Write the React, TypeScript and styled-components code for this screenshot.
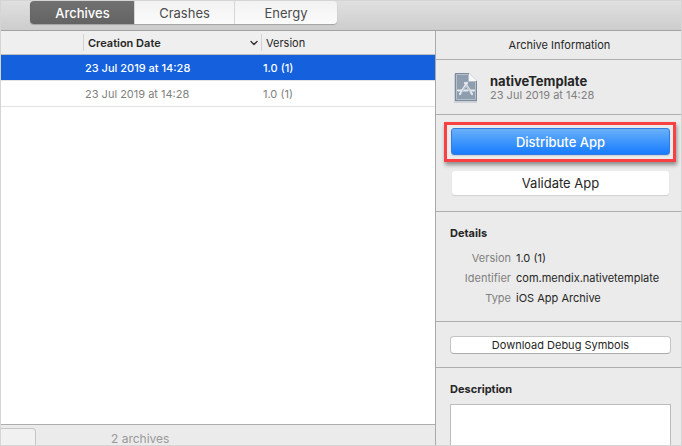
import React from 'react';
import styled, { createGlobalStyle } from 'styled-components';

const GlobalStyle = createGlobalStyle`
  *, *::before, *::after { box-sizing: border-box; }
  body { margin: 0; background: #ebebeb; }
  body, button, input, textarea {
    font-family: Inter, "Liberation Sans", sans-serif;
    font-size: 11px;
    line-height: 16px;
    color: #262626;
  }
`;

const Window = styled.div`
  display: flex;
  flex-direction: column;
  height: 100vh;
  overflow: hidden;
  border: 1px solid #d5d5d5;
`;

const Toolbar = styled.header`
  flex: none;
  height: 30px;
  padding: 0 29px;
  background: linear-gradient(#e0e0e0, #cdcdcd);
  border-bottom: 1px solid #a3a3a3;
`;

const Segments = styled.div`
  display: inline-grid;
  grid-template-columns: 104px 100px 103px;
  height: 23px;
  border-radius: 4px;
  overflow: hidden;
  box-shadow: 0 1px 1px #a2a2a2;
`;

const Segment = styled.button<{ $active?: boolean }>`
  padding: 0;
  border: 0;
  border-left: 1px solid ${(p) => (p.$active ? '#666' : '#d6d6d6')};
  background: ${(p) => (p.$active ? 'linear-gradient(#717171, #636363)' : 'linear-gradient(#f2f2f2, #fbfbfb)')};
  color: ${(p) => (p.$active ? '#fff' : '#4c4c4c')};
  font-size: 13px;
  font-weight: ${(p) => (p.$active ? 500 : 400)};
`;

const Body = styled.div`
  flex: 1;
  min-height: 0;
  display: grid;
  grid-template-columns: minmax(0, 1fr) 246px;
`;

const Main = styled.main`
  display: flex;
  flex-direction: column;
  min-width: 0;
  background: #fff;
`;

const Table = styled.table`
  width: 100%;
  table-layout: fixed;
  border-collapse: separate;
  border-spacing: 0;
`;

const HeadCell = styled.th<{ $width?: number }>`
  width: ${(p) => (p.$width ? `${p.$width}px` : 'auto')};
  height: 24px;
  padding: 0;
  background: #efefef;
  border-bottom: 1px solid #bdbdbd;
  text-align: left;
`;

const HeadLabel = styled.span<{ $sorted?: boolean }>`
  display: flex;
  align-items: center;
  justify-content: space-between;
  height: 17px;
  padding: 0 3px 0 4px;
  border-left: 1px solid #d2d2d2;
  font-weight: ${(p) => (p.$sorted ? 600 : 400)};
`;

const Row = styled.tr<{ $selected?: boolean }>`
  background: ${(p) => (p.$selected ? '#1460dd' : '#fff')};
  color: ${(p) => (p.$selected ? '#fff' : '#7f7f7f')};
  font-weight: ${(p) => (p.$selected ? 500 : 400)};
`;

const Cell = styled.td`
  height: 26px;
  padding: 0 2px;
  border-bottom: 1px solid #e2e2e2;
`;

const Footer = styled.footer`
  flex: none;
  display: flex;
  height: 21px;
  margin-top: auto;
  gap: 75px;
  padding-top: 3px;
  background: #ebebeb;
  border-top: 1px solid #adadad;
  overflow: hidden;
`;

const FilterBox = styled.input`
  flex: none;
  width: 35px;
  height: 24px;
  border: 1px solid #c6c6c6;
  border-left: 0;
  border-radius: 0 4px 4px 0;
  background: #f1f1f1;
`;

const Count = styled.span`
  margin-top: 3px;
  font-size: 12px;
  color: #999;
`;

const Inspector = styled.aside`
  display: flex;
  flex-direction: column;
  min-height: 0;
  overflow: hidden;
  background: #ebebeb;
  border-left: 1px solid #aaa;
`;

const PanelTitle = styled.h2`
  flex: none;
  margin: 0;
  padding: 6px 0 6px 2px;
  border-bottom: 1px solid #aeaeae;
  font-size: 11px;
  font-weight: 400;
  text-align: center;
`;

const Section = styled.section`
  flex: none;
  padding: 13px 10px 15px 14px;
  border-bottom: 1px solid #aeaeae;

  &:last-child { border-bottom: 0; }
`;

const AppSummary = styled(Section)`
  display: flex;
  align-items: center;
  gap: 10px;
  height: 55px;
  padding: 2px 16px 0;
`;

const AppName = styled.h1`
  margin: 0;
  font-size: 13px;
  line-height: 14px;
  font-weight: 700;
`;

const Muted = styled.span`
  display: block;
  line-height: 14px;
  color: #7f7f7f;
`;

const Actions = styled(Section)`
  display: flex;
  flex-direction: column;
  gap: 9px;
  padding: 7px 5px 16px 8px;
`;

const Callout = styled.div`
  padding: 3px 3px 4px 4px;
  border: 3px solid #f94144;
  box-shadow: 1px 3px 4px rgba(0, 0, 0, 0.4);
`;

const ActionButton = styled.button<{ $primary?: boolean }>`
  display: block;
  width: ${(p) => (p.$primary ? '100%' : 'auto')};
  height: ${(p) => (p.$primary ? 27 : 24)}px;
  margin: ${(p) => (p.$primary ? '0' : '0 7px 0 8px')};
  padding: 0;
  border: ${(p) => (p.$primary ? '1px solid #347be2' : '0')};
  border-radius: 3px;
  background: ${(p) => (p.$primary ? 'linear-gradient(#68b1fa, #187bff)' : '#fff')};
  box-shadow: 0 1px 1px rgba(0, 0, 0, 0.12);
  color: ${(p) => (p.$primary ? '#fff' : '#262626')};
  font-size: 13px;
  font-weight: ${(p) => (p.$primary ? 500 : 400)};
`;

const DownloadSection = styled(Section)`
  padding-top: 14px;
  padding-bottom: 13px;
`;

const SmallButton = styled.button`
  display: block;
  width: 100%;
  height: 18px;
  padding: 0;
  border: 1px solid #c4c4c4;
  border-bottom-color: #acacac;
  border-radius: 4px;
  background: #fff;
`;

const SectionTitle = styled.h3`
  margin: 0;
  font-size: 11px;
  font-weight: 700;
`;

const DetailList = styled.dl`
  display: grid;
  grid-template-columns: 61px 1fr;
  gap: 4px 5px;
  margin: 9px 0 0;
`;

const Term = styled.dt`
  text-align: right;
  color: #7f7f7f;
`;

const Value = styled.dd`
  margin: 0;
`;

const Description = styled.textarea`
  display: block;
  width: 100%;
  height: 80px;
  margin-top: 7px;
  border: 1px solid #bcbcbc;
  background: #fff;
  resize: none;
`;

const SortIcon = () => (
  <svg width="8" height="6" viewBox="0 0 8 6" fill="none" stroke="#333" strokeWidth="1.4" strokeLinecap="round" strokeLinejoin="round" aria-hidden="true">
    <path d="M1 1.5 4 4.5 7 1.5" />
  </svg>
);

const ArchiveIcon = () => (
  <svg width="28" height="32" viewBox="0 0 28 32" aria-hidden="true">
    <path d="M2 2h15l8 8v21H2z" fill="#b9bec4" opacity=".6" />
    <path d="M3 1h14l8 8v20H3z" fill="#7b8b9c" />
    <path d="M4.5 2.5h12v7h7v18h-19z" fill="#8f9eae" stroke="#b5c0ca" />
    <path d="M17 1v8h8z" fill="#f4f6f8" />
    <g fill="none" stroke="#e4eaf0" strokeLinecap="round" strokeWidth="2.2">
      <path d="M15 11 8 22M13 11 20 22" />
      <path d="M6 18.5h9.500M18.500 18.500h3.500" />
    </g>
    <path d="M14 13.500 9.500 21M14.500 13.500l4 7" stroke="#8797a8" strokeWidth=".5" />
  </svg>
);

const archives = [
  { date: '23 Jul 2019 at 14:28', version: '1.0 (1)', selected: true },
  { date: '23 Jul 2019 at 14:28', version: '1.0 (1)', selected: false },
];

const details = [
  ['Version', '1.0 (1)'],
  ['Identifier', 'com.mendix.nativetemplate'],
  ['Type', 'iOS App Archive'],
];

export default function App() {
  return (
    <>
      <GlobalStyle />
      <Window>
        <Toolbar>
          <Segments>
            <Segment $active aria-pressed="true">Archives</Segment>
            <Segment>Crashes</Segment>
            <Segment>Energy</Segment>
          </Segments>
        </Toolbar>
        <Body>
          <Main>
            <Table>
              <thead>
                <tr>
                  <HeadCell $width={82} aria-label="Name" />
                  <HeadCell $width={178} aria-sort="descending">
                    <HeadLabel $sorted>Creation Date <SortIcon /></HeadLabel>
                  </HeadCell>
                  <HeadCell><HeadLabel>Version</HeadLabel></HeadCell>
                </tr>
              </thead>
              <tbody>
                {archives.map((a, i) => (
                  <Row key={i} $selected={a.selected}>
                    <Cell />
                    <Cell>{a.date}</Cell>
                    <Cell>{a.version}</Cell>
                  </Row>
                ))}
              </tbody>
            </Table>
            <Footer>
              <FilterBox type="text" aria-label="Filter" />
              <Count>2 archives</Count>
            </Footer>
          </Main>
          <Inspector>
            <PanelTitle>Archive Information</PanelTitle>
            <AppSummary>
              <ArchiveIcon />
              <div>
                <AppName>nativeTemplate</AppName>
                <Muted>23 Jul 2019 at 14:28</Muted>
              </div>
            </AppSummary>
            <Actions>
              <Callout>
                <ActionButton $primary>Distribute App</ActionButton>
              </Callout>
              <ActionButton>Validate App</ActionButton>
            </Actions>
            <Section>
              <SectionTitle>Details</SectionTitle>
              <DetailList>
                {details.map(([term, value]) => (
                  <React.Fragment key={term}>
                    <Term>{term}</Term>
                    <Value>{value}</Value>
                  </React.Fragment>
                ))}
              </DetailList>
            </Section>
            <DownloadSection>
              <SmallButton>Download Debug Symbols</SmallButton>
            </DownloadSection>
            <Section>
              <SectionTitle as="label" htmlFor="description">Description</SectionTitle>
              <Description id="description" />
            </Section>
          </Inspector>
        </Body>
      </Window>
    </>
  );
}
